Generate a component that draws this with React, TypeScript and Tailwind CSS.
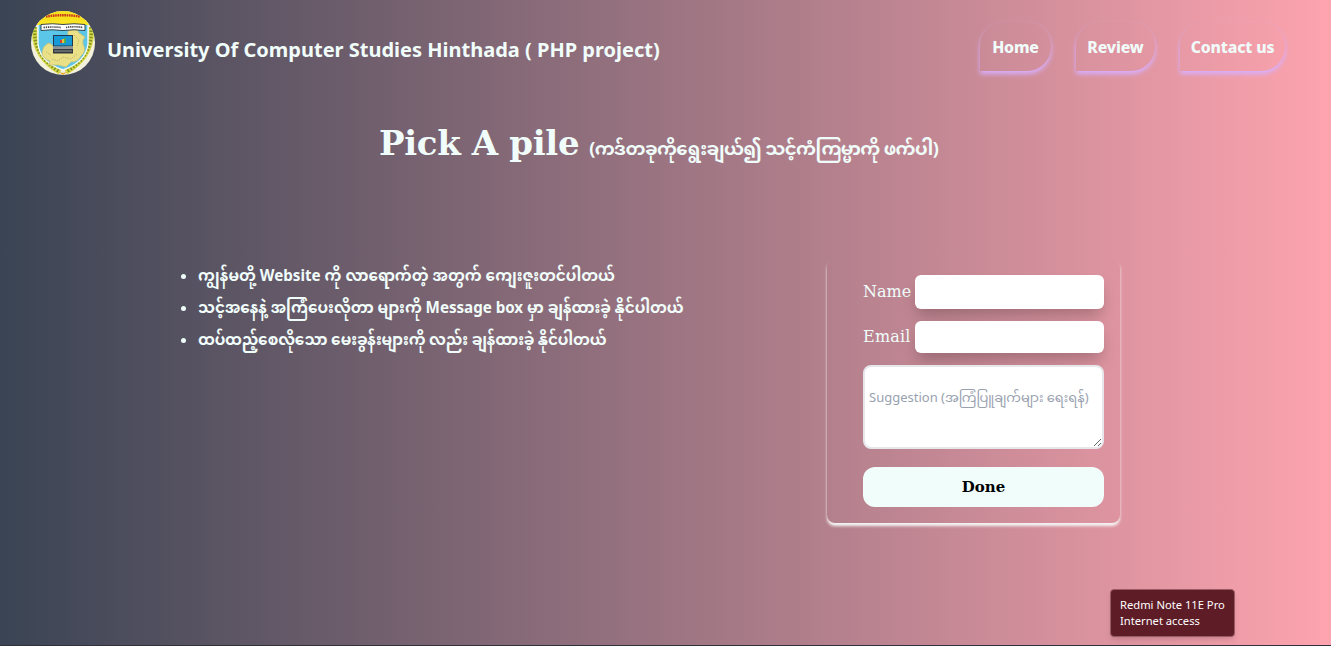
import React from "react";

const sans = "font-['Noto_Sans','Noto_Sans_Myanmar',sans-serif]";
const serif = "font-['DejaVu_Serif','Noto_Sans_Myanmar',serif]";

function Logo() {
  return (
    <svg viewBox="0 0 64 64" className="h-16 w-16 shrink-0">
      <defs>
        <clipPath id="disc">
          <circle cx="32" cy="32" r="32" />
        </clipPath>
      </defs>
      <g clipPath="url(#disc)">
        <rect width="64" height="64" fill="#f3f1dc" />
        <path d="M0 0H64V13Q32 7 0 13Z" fill="#f7e11d" />
        <path d="M15 5.5Q32 3 49 5.5" fill="none" stroke="#c9341f" strokeWidth="2.4" strokeDasharray="1.6 .7" />
        <path d="M4 16Q1 44 29 61M60 16Q63 44 35 61" fill="none" stroke="#d9d84a" strokeWidth="5.5" />
        <path d="M4 16Q1 44 29 61M60 16Q63 44 35 61" fill="none" stroke="#7f9420" strokeWidth="3.4" strokeDasharray="1.6 1.6" />
        <path d="M7 12H57V33Q55 51 32 59Q9 51 7 33Z" fill="#5cc6e8" stroke="#f4faf8" strokeWidth="1.4" />
        <path d="M6 11Q32 7 58 11V14H6Z" fill="#f9e526" />
        <path d="M37 24Q36 18 41 19Q46 16 48 22L54 26Q51 29 52 33Q56 40 50 45Q47 51 40 51L35 56L27 54L18 54L19 50Q12 48 11 42Q12 34 18 32Q22 33 23 38L36 36Z" fill="#e9e088" stroke="#c9c27a" strokeWidth=".8" />
        <path d="M15 41L20 44M21 48L27 50L32 46L40 48L46 43M43 24L48 29L46 35" fill="none" stroke="#c3b763" strokeWidth=".9" strokeDasharray="1.5 1" />
        <path d="M10 13.5Q22 12 32 13.5Q43 12 54 13.5V19.5Q43 18 32 19.5Q21 18 10 19.5Z" fill="#fff" stroke="#27333a" strokeWidth=".9" />
        <path d="M12.5 16.5Q22 15.5 30 16.5M35 16.5Q43 15 52 16.5" fill="none" stroke="#444" strokeWidth="1.7" strokeDasharray="1.3 .8" />
        <rect x="22" y="24" width="20" height="11.5" fill="#24364b" />
        <rect x="23" y="25" width="18" height="9.5" fill="#169ad6" />
        <path d="M29 32V29H31V32" fill="#d34035" />
        <path d="M31 32V28H33V32" fill="#e3c33a" />
        <path d="M33 32V27H35V32" fill="#4fae55" />
        <path d="M22 35.5H42V38H22Z" fill="#8b9396" />
        <path d="M22 38H42V42.5H22Z" fill="#34383c" />
        <path d="M23 40H41" stroke="#8f9699" />
        <path d="M28 61L32 62L36 61L32 64Z" fill="#e7a71e" />
      </g>
    </svg>
  );
}

function NavLink({ label, className }: { label: string; className: string }) {
  return (
    <a
      href="#"
      className={`flex h-[49px] items-center justify-center whitespace-nowrap rounded-tl-3xl rounded-tr-3xl rounded-br-3xl pt-[3px] font-extrabold shadow-[0_3px_5px_#d8b0ff] ${className}`}
    >
      {label}
    </a>
  );
}

export default function App() {
  return (
    <div className={`relative flex h-[646px] w-full flex-col overflow-hidden border-b border-[#30313a] bg-linear-to-r/srgb from-[#3a4454] to-[#fda4af] text-[#f0fdfa] ${sans}`}>
      <header className="flex h-[86px] items-start pl-[31px] pt-[11px]">
        <Logo />
        <h1 className="ml-3 mt-[25px] whitespace-nowrap text-xl leading-7 font-bold">
          University Of Computer Studies Hinthada ( PHP project)
        </h1>
        <nav className="ml-auto mr-[46px] mt-[11px] flex gap-[25px] text-[15.8px] tracking-[-0.15px]">
          <NavLink label="Home" className="w-[71px]" />
          <NavLink label="Review" className="w-[79px]" />
          <NavLink label="Contact us" className="w-[105px]" />
        </nav>
      </header>

      <h2 className="ml-[379px] mt-8 flex h-[50px] items-baseline whitespace-nowrap font-bold leading-[50px]">
        <span className={`text-[34px] tracking-[-0.35px] ${serif}`}>Pick A pile</span>
        <span className="ml-[10px] text-[18px] tracking-[-0.58px]">(ကဒ်တခုကိုရွေးချယ်၍ သင့်ကံကြမ္မာကို ဖက်ပါ)</span>
      </h2>

      <main className="mt-[91px] flex items-start pl-[198px]">
        <ul className="w-[629px] list-outside list-disc whitespace-nowrap text-[15.2px] leading-8 font-bold">
          <li>ကျွန်မတို့ Website ကို လာရောက်တဲ့ အတွက် ကျေးဇူးတင်ပါတယ်</li>
          <li className="tracking-[-0.04px]">သင့်အနေနဲ့ အကြံပေးလိုတာ များကို Message box မှာ ချန်ထားခဲ့ နိုင်ပါတယ်</li>
          <li className="tracking-[-0.18px]">ထပ်ထည့်စေလိုသော မေးခွန်းများကို လည်း ချန်ထားခဲ့ နိုင်ပါတယ်</li>
        </ul>
        <form className={`flex h-[264px] w-[293px] flex-col rounded-lg pl-9 pr-4 pt-4 shadow-[0_3px_3px_#f4f4f4] ${serif}`}>
          <label className="flex items-center justify-between text-base">
            Name
            <input className="h-[34px] w-[189px] rounded-md bg-white shadow-[0_10px_15px_-3px_rgba(0,0,0,0.22)]" />
          </label>
          <label className="mt-3 flex items-center justify-between text-base">
            <span className="tracking-[0.2px]">Email</span>
            <input className="h-8 w-[189px] rounded-md bg-white shadow-[0_10px_15px_-3px_rgba(0,0,0,0.22)]" />
          </label>
          <textarea
            placeholder="Suggestion (အကြံပြူချက်များ ရေးရန်)"
            className={`mt-3 h-[84px] w-[241px] shrink-0 overflow-hidden rounded-lg border-2 border-gray-200 bg-white px-1 pt-5 text-[13px] leading-5 text-gray-700 placeholder:text-gray-400 ${sans}`}
          />
          <button type="button" className="mt-[18px] h-10 w-[241px] shrink-0 rounded-xl bg-[#f0fdfa] text-[15px] font-bold text-black">
            Done
          </button>
        </form>
      </main>

      <div className="absolute left-[1110px] top-[589px] h-[48px] w-[125px] whitespace-nowrap rounded border border-[#9b5b65] bg-[#5d1c26] px-[9px] pt-[7px] text-[11.2px] leading-4 text-white shadow-md">
        <p>Redmi Note 11E Pro</p>
        <p>Internet access</p>
      </div>
    </div>
  );
}
